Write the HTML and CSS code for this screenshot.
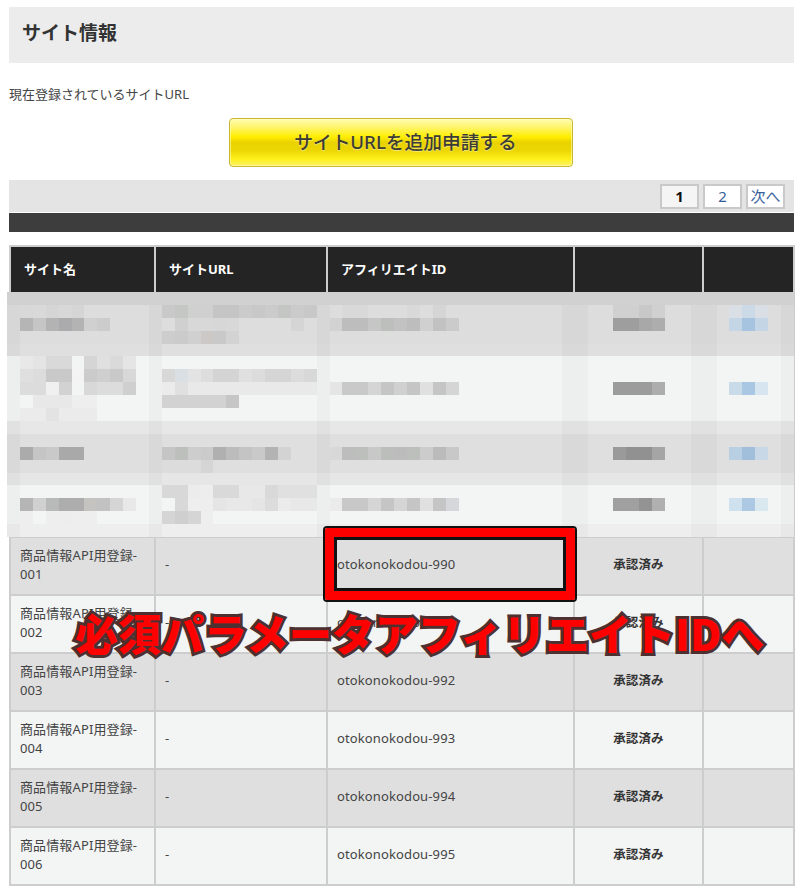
FILE: index.html
```html
<!DOCTYPE html>
<html lang="ja">
<head>
<meta charset="utf-8">
<title>サイト情報</title>
<link rel="stylesheet" href="styles.css">
</head>
<body>
<main class="page">
  <h1 class="title">サイト情報</h1>
  <p class="lead">現在登録されているサイトURL</p>
  <div class="action"><a class="apply-btn">サイトURLを追加申請する</a></div>
  <nav class="pager">
    <span class="page-item current">1</span>
    <a class="page-item">2</a>
    <a class="page-item">次へ</a>
  </nav>
  <div class="darkbar"></div>
  <div class="table-wrap">
    <table class="sites">
      <colgroup>
        <col class="c1"><col class="c2"><col class="c3"><col class="c4"><col class="c5">
      </colgroup>
      <thead>
        <tr><th>サイト名</th><th>サイトURL</th><th>アフィリエイトID</th><th></th><th></th></tr>
      </thead>
      <tbody>
        <tr class="masked"><td></td><td></td><td></td><td></td><td></td></tr>
        <tr class="masked"><td></td><td></td><td></td><td></td><td></td></tr>
        <tr class="masked"><td></td><td></td><td></td><td></td><td></td></tr>
        <tr class="masked"><td></td><td></td><td></td><td></td><td></td></tr>
        <tr class="odd"><td>商品情報API用登録-<br>001</td><td>-</td><td>otokonokodou-990</td><td class="status">承認済み</td><td></td></tr>
        <tr class="even"><td>商品情報API用登録-<br>002</td><td>-</td><td>otokonokodou-991</td><td class="status">承認済み</td><td></td></tr>
        <tr class="odd"><td>商品情報API用登録-<br>003</td><td>-</td><td>otokonokodou-992</td><td class="status">承認済み</td><td></td></tr>
        <tr class="even"><td>商品情報API用登録-<br>004</td><td>-</td><td>otokonokodou-993</td><td class="status">承認済み</td><td></td></tr>
        <tr class="odd"><td>商品情報API用登録-<br>005</td><td>-</td><td>otokonokodou-994</td><td class="status">承認済み</td><td></td></tr>
        <tr class="even"><td>商品情報API用登録-<br>006</td><td>-</td><td>otokonokodou-995</td><td class="status">承認済み</td><td></td></tr>
      </tbody>
    </table>

    <svg class="mosaic" viewBox="0 0 61 19" preserveAspectRatio="none" shape-rendering="crispEdges" aria-hidden="true">
      <path d="M0 0h61v1h-61z" fill="#d1d1d1"/>
      <path d="M0 1h61v3h-61z" fill="#dddddd"/>
      <path d="M0 4h61v1h-61z" fill="#dfdfdf"/>
      <path d="M0 5h61v5h-61z" fill="#f3f4f4"/>
      <path d="M0 10h61v1h-61z" fill="#e7e7e7"/>
      <path d="M0 11h61v3h-61z" fill="#dfdfdf"/>
      <path d="M0 14h61v1h-61z" fill="#e6e6e6"/>
      <path d="M0 15h61v3h-61z" fill="#f3f4f4"/>
      <path d="M0 18h61v1h-61z" fill="#eeeeee"/>
      <path d="M0 1h1v18h-1zM11 1h1v18h-1zM24 1h1v18h-1zM43 1h2v18h-2zM53 1h2v18h-2zM60 1h1v18h-1z" fill="#000" fill-opacity=".025"/>

      <rect x="1" y="1" fill="#d8d8d8"/><rect x="2" y="1" fill="#d9d9d9"/><rect x="3" y="1" fill="#d5d5d5"/><rect x="4" y="1" fill="#d8d8d8"/><rect x="5" y="1" fill="#d5d5d5"/>
      <rect x="12" y="1" fill="#c9c9c9"/><rect x="13" y="1" fill="#c5c7c5"/><rect x="14" y="1" fill="#d0d0d0"/><rect x="15" y="1" fill="#d0d0d0"/><rect x="16" y="1" fill="#c5c5c5"/><rect x="17" y="1" fill="#c5c5c5"/><rect x="18" y="1" fill="#cbcbcb"/><rect x="19" y="1" fill="#c8c8c8"/><rect x="20" y="1" fill="#cbcbcb"/><rect x="21" y="1" fill="#c4c6c4"/><rect x="22" y="1" fill="#cbcbcb"/><rect x="23" y="1" fill="#c8c8c8"/>
      <rect x="26" y="1" fill="#d9d9d9"/><rect x="27" y="1" fill="#d9d9d9"/><rect x="31" y="1" fill="#d9d9d9"/><rect x="33" y="1" fill="#d5d5d5"/>
      <rect x="47" y="1" fill="#d0d0d0"/><rect x="48" y="1" fill="#d0d0d0"/><rect x="49" y="1" fill="#c8c8c8"/><rect x="50" y="1" fill="#d0d0d0"/>
      <rect x="56" y="1" fill="#d9dfe5"/><rect x="57" y="1" fill="#ccd9e6"/><rect x="58" y="1" fill="#d9dfe5"/>

      <rect x="1" y="2" fill="#b5b5b5"/><rect x="2" y="2" fill="#c5c5c5"/><rect x="3" y="2" fill="#b3b3b3"/><rect x="4" y="2" fill="#ababad"/><rect x="5" y="2" fill="#b3b3b3"/><rect x="6" y="2" fill="#d0d0d0"/><rect x="7" y="2" fill="#cccccc"/>
      <rect x="13" y="2" fill="#d0d0d0"/><rect x="14" y="2" fill="#d8d8d8"/><rect x="15" y="2" fill="#d8d8d8"/><rect x="16" y="2" fill="#d7d7d7"/><rect x="17" y="2" fill="#d8d8d8"/><rect x="22" y="2" fill="#d5d5d5"/>
      <rect x="25" y="2" fill="#d2d2d2"/><rect x="26" y="2" fill="#bdbdbd"/><rect x="27" y="2" fill="#bdbdbd"/><rect x="28" y="2" fill="#c6c6c6"/><rect x="29" y="2" fill="#bdbfbd"/><rect x="30" y="2" fill="#c2c2c2"/><rect x="31" y="2" fill="#bdbdbd"/><rect x="32" y="2" fill="#d0d0d0"/><rect x="33" y="2" fill="#c2c2c2"/><rect x="34" y="2" fill="#cbcbcb"/>
      <rect x="47" y="2" fill="#9e9e9e"/><rect x="48" y="2" fill="#9e9e9e"/><rect x="49" y="2" fill="#a8a8a8"/><rect x="50" y="2" fill="#adadad"/>
      <rect x="56" y="2" fill="#c4d5e6"/><rect x="57" y="2" fill="#a6c3e0"/><rect x="58" y="2" fill="#c4d5e6"/>

      <rect x="12" y="3" fill="#cdcdcd"/><rect x="13" y="3" fill="#cbcbcb"/><rect x="14" y="3" fill="#d0d0d0"/><rect x="15" y="3" fill="#cbc8c6"/><rect x="16" y="3" fill="#c9c9c9"/><rect x="17" y="3" fill="#d3d3d3"/>

      <rect x="1" y="5" fill="#e8e8e8"/><rect x="2" y="5" fill="#e4e4e4"/><rect x="3" y="5" fill="#d9d9d9"/><rect x="4" y="5" fill="#d9d9d9"/><rect x="6" y="5" fill="#d5d5d5"/><rect x="7" y="5" fill="#e0e0e0"/><rect x="8" y="5" fill="#dadada"/><rect x="9" y="5" fill="#e5e5e5"/>

      <rect x="1" y="6" fill="#dfdfdf"/><rect x="2" y="6" fill="#dcdcdc"/><rect x="3" y="6" fill="#c9c9c9"/><rect x="4" y="6" fill="#c9c9c9"/><rect x="5" y="6" fill="#f3f3f3"/><rect x="6" y="6" fill="#cbcbcb"/><rect x="7" y="6" fill="#cfcfcf"/><rect x="8" y="6" fill="#c9c9c9"/><rect x="9" y="6" fill="#d8d8d8"/>
      <rect x="12" y="6" fill="#d8d8d8"/><rect x="13" y="6" fill="#dadfe3"/><rect x="14" y="6" fill="#e3e3e3"/><rect x="15" y="6" fill="#dddddd"/><rect x="16" y="6" fill="#d4d4d4"/><rect x="17" y="6" fill="#d4d4d4"/><rect x="18" y="6" fill="#e0e0e0"/><rect x="19" y="6" fill="#dcdcdc"/><rect x="20" y="6" fill="#d5d5d5"/><rect x="21" y="6" fill="#d5d5d5"/><rect x="22" y="6" fill="#dcdcdc"/><rect x="23" y="6" fill="#d8d8d8"/>

      <rect x="1" y="7" fill="#dcdcdc"/><rect x="2" y="7" fill="#dcdcdc"/><rect x="3" y="7" fill="#f0f0f0"/><rect x="4" y="7" fill="#d2d2d2"/><rect x="6" y="7" fill="#d8d8d8"/><rect x="7" y="7" fill="#dcdcdc"/><rect x="8" y="7" fill="#dcdcdc"/><rect x="9" y="7" fill="#cfcfcf"/>
      <rect x="12" y="7" fill="#ebebeb"/><rect x="13" y="7" fill="#e0e0e0"/><rect x="14" y="7" fill="#e9e9e9"/><rect x="15" y="7" fill="#e9e9e9"/><rect x="16" y="7" fill="#e9e9e9"/><rect x="17" y="7" fill="#e9e9e9"/><rect x="18" y="7" fill="#e9e9e9"/><rect x="19" y="7" fill="#e9e9e9"/><rect x="20" y="7" fill="#e9e9e9"/><rect x="21" y="7" fill="#e9e9e9"/><rect x="22" y="7" fill="#e9e9e9"/><rect x="23" y="7" fill="#e9e9e9"/>
      <rect x="25" y="7" fill="#e5e5e5"/><rect x="26" y="7" fill="#c9c9c9"/><rect x="27" y="7" fill="#c9c9c9"/><rect x="28" y="7" fill="#d5d5d5"/><rect x="29" y="7" fill="#c5c5c5"/><rect x="30" y="7" fill="#d0d0d0"/><rect x="31" y="7" fill="#c5c5c5"/><rect x="32" y="7" fill="#e0e0e0"/><rect x="33" y="7" fill="#c5c5c5"/><rect x="34" y="7" fill="#d5d5d5"/>
      <rect x="47" y="7" fill="#9c9c9c"/><rect x="48" y="7" fill="#9c9c9c"/><rect x="49" y="7" fill="#9c9c9c"/><rect x="50" y="7" fill="#adadad"/>
      <rect x="56" y="7" fill="#c9dae9"/><rect x="57" y="7" fill="#a9c6e3"/><rect x="58" y="7" fill="#d6e5f0"/>

      <rect x="2" y="8" fill="#e8e8e8"/><rect x="3" y="8" fill="#e8e8e8"/><rect x="4" y="8" fill="#e8e8e8"/><rect x="5" y="8" fill="#eeeeee"/><rect x="6" y="8" fill="#eeeeee"/>
      <rect x="12" y="8" fill="#d2d2d2"/><rect x="13" y="8" fill="#d2d2d2"/><rect x="14" y="8" fill="#d2d2d2"/><rect x="15" y="8" fill="#d2d2d2"/><rect x="16" y="8" fill="#d2d2d2"/><rect x="17" y="8" fill="#c6c6c6"/>

      <rect x="1" y="9" fill="#ebebeb"/><rect x="2" y="9" fill="#ebebeb"/><rect x="3" y="9" fill="#e3e3e3"/><rect x="4" y="9" fill="#ebebeb"/><rect x="5" y="9" fill="#ebebeb"/><rect x="6" y="9" fill="#ebebeb"/>

      <rect x="1" y="12" fill="#ababab"/><rect x="2" y="12" fill="#c5c5c5"/><rect x="3" y="12" fill="#c9c9c9"/><rect x="4" y="12" fill="#a9a9a9"/><rect x="5" y="12" fill="#a9a9a9"/>
      <rect x="12" y="12" fill="#c5c5c5"/><rect x="13" y="12" fill="#bdbfbd"/><rect x="14" y="12" fill="#cdcdcd"/><rect x="15" y="12" fill="#cbcbcb"/><rect x="16" y="12" fill="#b0b0b0"/><rect x="17" y="12" fill="#bcbcbc"/><rect x="18" y="12" fill="#c4c4c4"/><rect x="19" y="12" fill="#c9c9c9"/><rect x="20" y="12" fill="#b3b3b3"/><rect x="21" y="12" fill="#d3d3d3"/>
      <rect x="25" y="12" fill="#d8d8d8"/><rect x="26" y="12" fill="#bdbdbd"/><rect x="27" y="12" fill="#bdbfbd"/><rect x="28" y="12" fill="#c8c8c8"/><rect x="29" y="12" fill="#bcbebc"/><rect x="30" y="12" fill="#bcbcbc"/><rect x="31" y="12" fill="#bdbfbd"/><rect x="32" y="12" fill="#cccccc"/><rect x="33" y="12" fill="#bbbbbb"/><rect x="34" y="12" fill="#c8c8c8"/>
      <rect x="47" y="12" fill="#9a9a9a"/><rect x="48" y="12" fill="#919191"/><rect x="49" y="12" fill="#919191"/><rect x="50" y="12" fill="#a5a5a5"/>
      <rect x="56" y="12" fill="#b9cfe3"/><rect x="57" y="12" fill="#a1bedb"/><rect x="58" y="12" fill="#c8d8e6"/>

      <rect x="12" y="13" fill="#dcdcdc"/><rect x="13" y="13" fill="#dcdcdc"/><rect x="14" y="13" fill="#dcdcdc"/><rect x="15" y="13" fill="#d5d5d5"/>

      <rect x="12" y="15" fill="#d8d8d8"/><rect x="13" y="15" fill="#d8d8d8"/><rect x="14" y="15" fill="#ececec"/><rect x="15" y="15" fill="#ededed"/><rect x="16" y="15" fill="#d9d9d9"/><rect x="17" y="15" fill="#d9d9d9"/><rect x="18" y="15" fill="#e8e8e8"/><rect x="19" y="15" fill="#e8e8e8"/><rect x="20" y="15" fill="#d9d9d9"/><rect x="21" y="15" fill="#e0e0e0"/><rect x="22" y="15" fill="#e0e0e0"/><rect x="23" y="15" fill="#e0e0e0"/>

      <rect x="1" y="16" fill="#b5b5b5"/><rect x="2" y="16" fill="#d0d0d0"/><rect x="3" y="16" fill="#b8baba"/><rect x="4" y="16" fill="#adadad"/><rect x="5" y="16" fill="#adadad"/><rect x="6" y="16" fill="#c5c3c0"/><rect x="7" y="16" fill="#c2c2c2"/><rect x="8" y="16" fill="#d5d5d5"/><rect x="9" y="16" fill="#e8e8e8"/>
      <rect x="13" y="16" fill="#d8d8d8"/><rect x="14" y="16" fill="#eeeeee"/><rect x="15" y="16" fill="#eeeeee"/><rect x="16" y="16" fill="#e5e5e5"/><rect x="17" y="16" fill="#e8e8e8"/><rect x="18" y="16" fill="#e8e8e8"/><rect x="19" y="16" fill="#e5e5e5"/><rect x="20" y="16" fill="#dcdcdc"/><rect x="21" y="16" fill="#ebebeb"/><rect x="22" y="16" fill="#e8e8e8"/><rect x="23" y="16" fill="#e8e8e8"/>
      <rect x="25" y="16" fill="#ebebeb"/><rect x="26" y="16" fill="#c8c8c8"/><rect x="27" y="16" fill="#c8c8c8"/><rect x="28" y="16" fill="#d5d5d5"/><rect x="29" y="16" fill="#c5c5c5"/><rect x="30" y="16" fill="#d5d5d5"/><rect x="31" y="16" fill="#c5c5c5"/><rect x="32" y="16" fill="#e0e0e0"/><rect x="33" y="16" fill="#c5c5c5"/><rect x="34" y="16" fill="#d5d7da"/>
      <rect x="47" y="16" fill="#a0a0a0"/><rect x="48" y="16" fill="#a0a0a0"/><rect x="49" y="16" fill="#939393"/><rect x="50" y="16" fill="#b0b0b0"/>
      <rect x="56" y="16" fill="#cfe0ee"/><rect x="57" y="16" fill="#acc8e3"/><rect x="58" y="16" fill="#dae8f0"/>

      <rect x="1" y="17" fill="#eeeeee"/><rect x="3" y="17" fill="#eeeeee"/><rect x="4" y="17" fill="#ededed"/><rect x="5" y="17" fill="#eeeeee"/><rect x="6" y="17" fill="#eeeeee"/>
      <rect x="12" y="17" fill="#d5d5d5"/><rect x="13" y="17" fill="#cfcfcf"/><rect x="14" y="17" fill="#d5d5d5"/><rect x="15" y="17" fill="#eeeeee"/>
    </svg>

    <div class="highlight"></div>
    <div class="annotation">必須パラメータアフィリエイトIDへ</div>
  </div>
</main>
</body>
</html>
```

FILE: styles.css
```css
* { box-sizing: border-box; }

html, body { margin: 0; padding: 0; background: #fff; }

body {
  font-family: "Noto Sans", "Noto Sans CJK JP", sans-serif;
  font-size: 13px;
  color: #444;
}

.page {
  width: 800px;
  padding: 7px 6px 0 9px;
}

.title {
  margin: 0;
  height: 56px;
  padding-left: 13px;
  background: #ececec;
  font-size: 19px;
  font-weight: 700;
  line-height: 52px;
  color: #333;
}

.lead {
  margin: 22px 0 0;
  height: 19px;
  line-height: 19px;
  font-size: 13px;
  color: #444;
}

.action {
  display: flex;
  justify-content: center;
  margin-top: 14px;
  padding-right: 1px;
}

.apply-btn {
  display: block;
  width: 344px;
  height: 49px;
  padding-left: 9px;
  border: 1px solid #c9b52f;
  border-radius: 4px;
  background: linear-gradient(to bottom, #fffcb0 0%, #fff46a 18%, #ffee00 38%, #e9d200 50%, #ecd705 68%, #fff01c 85%, #fff166 100%);
  box-shadow: inset 0 0 0 1px rgba(255, 255, 200, .55);
  text-align: center;
  font-size: 18.7px;
  font-weight: 500;
  line-height: 46px;
  color: #3c3c34;
  text-shadow: 0 1px 1px rgba(255, 255, 255, .45);
}

.pager {
  display: flex;
  justify-content: flex-end;
  gap: 4px;
  height: 32px;
  margin-top: 13px;
  padding: 4px 9px 0 0;
  background: #e4e4e4;
}

.page-item {
  display: block;
  width: 39px;
  height: 25px;
  border: 2px solid #c9c9c9;
  background: #fff;
  text-align: center;
  font-size: 15px;
  line-height: 20px;
  color: #36619b;
}

.page-item.current {
  background: #f5f5f5;
  font-weight: 700;
  color: #111;
}

.darkbar {
  height: 19px;
  margin-top: 1px;
  background: #3d3d3d;
}

.table-wrap {
  position: relative;
  margin-top: 13px;
}

.sites {
  width: 784px;
  border-collapse: collapse;
  table-layout: fixed;
  border: 2px solid #cdcdcd;
}

.c1 { width: 145px; }
.c2 { width: 172px; }
.c3 { width: 247px; }
.c4 { width: 129px; }
.c5 { width: 91px; }

.sites th,
.sites td {
  border: 2px solid #cdcdcd;
  vertical-align: middle;
  text-align: left;
  font-size: 13px;
}

.sites th {
  height: 47px;
  padding: 0 0 2px 13px;
  background: #242424;
  color: #fff;
  font-weight: 700;
}

.sites td {
  height: 58px;
  padding: 0 4px 3px 9px;
  line-height: 19px;
  letter-spacing: .12px;
}

.sites .masked td {
  height: 61px;
  background: #e5e5e5;
}

.odd td { background: #dfdfdf; }
.even td { background: #f3f4f4; }

.sites .status {
  padding: 0 0 3px;
  text-align: center;
  font-weight: 700;
  font-size: 12.5px;
  color: #333;
}

.mosaic {
  position: absolute;
  left: -2.5px;
  top: 46.5px;
  width: 787px;
  height: 245.1px;
}

.mosaic rect {
  width: 1px;
  height: 1px;
}

.highlight {
  position: absolute;
  left: 316px;
  top: 283px;
  width: 250px;
  height: 72px;
  border: 9px solid #f00;
  border-radius: 2px;
  box-shadow: 0 0 0 2px #111, inset 0 0 0 3px #111;
}

.annotation {
  position: absolute;
  left: 66px;
  top: 357px;
  white-space: nowrap;
  font-family: "Noto Sans CJK JP", sans-serif;
  font-size: 43px;
  font-weight: 900;
  line-height: 60px;
  color: #f00;
  -webkit-text-stroke: 6px #4d3030;
  paint-order: stroke fill;
}
```
